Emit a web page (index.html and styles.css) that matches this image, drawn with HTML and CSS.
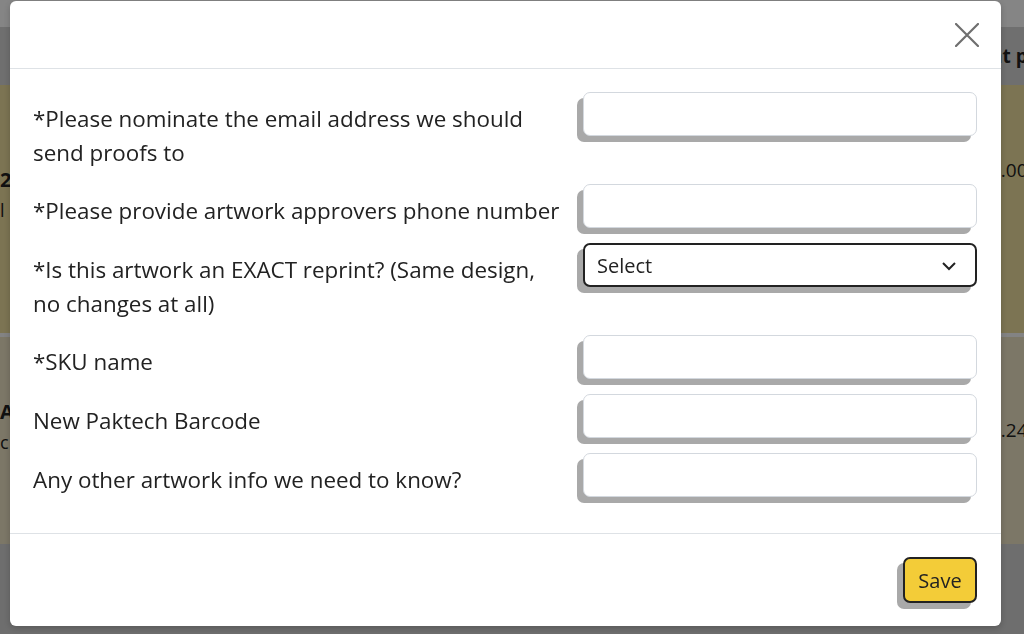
FILE: index.html
```html
<!DOCTYPE html>
<html lang="en">
<head>
    <title>Artwork Details</title>
    <link rel="stylesheet" href="styles.css">
</head>
<body>
    <div class="page">
        <div class="topbar"></div>
        <div class="orders-head">
            <div class="cell-main"></div>
            <div class="cell-end">nt price</div>
        </div>
        <div class="order-row yellow">
            <div class="cell-main first">
                <div class="item-code">2104</div>
                <div class="item-name">l &nbsp;lid</div>
            </div>
            <div class="cell-end first">1.00</div>
        </div>
        <div class="order-row cream">
            <div class="cell-main second">
                <div class="item-code">A</div>
                <div class="item-name">c</div>
            </div>
            <div class="cell-end second">1.24</div>
        </div>
    </div>

    <div class="backdrop"></div>

    <div class="modal">
        <div class="modal-header">
            <button class="close" type="button" aria-label="Close">
                <svg width="24" height="24" viewBox="0 0 24 24">
                    <path d="M1 1 L23 23 M23 1 L1 23" stroke="#6f6f6f" stroke-width="2.2" fill="none" stroke-linecap="round"/>
                </svg>
            </button>
        </div>
        <form class="modal-body">
            <div class="form-row">
                <label>*Please nominate the email address we should send proofs to</label>
                <input type="email" class="field">
            </div>
            <div class="form-row">
                <label>*Please provide artwork approvers phone number</label>
                <input type="text" class="field">
            </div>
            <div class="form-row">
                <label>*Is this artwork an EXACT reprint? (Same design, no changes at all)</label>
                <div class="select-wrap">
                    <select class="field select">
                        <option>Select</option>
                        <option>Yes</option>
                        <option>No</option>
                    </select>
                    <svg class="chevron" width="16" height="10" viewBox="0 0 16 10">
                        <path d="M2 2 L8 8 L14 2" stroke="#222" stroke-width="2" fill="none"/>
                    </svg>
                </div>
            </div>
            <div class="form-row">
                <label>*SKU name</label>
                <input type="text" class="field">
            </div>
            <div class="form-row">
                <label>New Paktech Barcode</label>
                <input type="text" class="field">
            </div>
            <div class="form-row">
                <label>Any other artwork info we need to know?</label>
                <input type="text" class="field">
            </div>
        </form>
        <div class="modal-footer">
            <button class="save" type="button">Save</button>
        </div>
    </div>
</body>
</html>
```

FILE: styles.css
```css
body {
    margin: 0;
    font-family: "Open Sans", "Noto Sans", sans-serif;
    color: #222;
    background-color: #d4d4d4;
    overflow: hidden;
}

/* page behind the modal */
.page {
    width: 1024px;
    height: 634px;
    background-color: #d4d4d4;
}

.topbar {
    height: 27px;
    background-color: #ffffff;
}

.orders-head,
.order-row {
    display: flex;
}

.orders-head {
    height: 58px;
    background-color: #d5d5d5;
    font-weight: bold;
    font-size: 19px;
    line-height: 58px;
}

.cell-main {
    flex: 1;
    padding-left: 0;
    font-size: 18px;
    line-height: 30px;
}

.cell-end {
    width: 34px;
    white-space: nowrap;
    overflow: hidden;
    font-size: 19px;
}

.order-row.yellow {
    height: 248px;
    background-color: #eedfa0;
}

.order-row.cream {
    height: 207px;
    background-color: #ede5c6;
    border-top: 4px solid #fcfcfc;
}

.item-code {
    font-weight: bold;
    font-size: 20px;
}

.cell-main.first { padding-top: 80px; }
.cell-end.first { padding-top: 72px; }
.cell-main.second { padding-top: 60px; }
.cell-end.second { padding-top: 80px; }

.backdrop {
    position: fixed;
    inset: 0;
    background-color: rgba(0, 0, 0, 0.48);
}

/* modal */
.modal {
    position: absolute;
    top: 1px;
    left: 10px;
    width: 991px;
    background-color: #ffffff;
    border-radius: 6px;
    box-shadow: 0 2px 6px rgba(0, 0, 0, 0.2);
}

.modal-header {
    height: 67px;
    border-bottom: 1px solid #dee2e6;
    display: flex;
    justify-content: flex-end;
    align-items: center;
    padding-right: 22px;
}

.close {
    background: none;
    border: none;
    padding: 0;
    width: 24px;
    height: 24px;
    cursor: pointer;
}

.modal-body {
    padding: 23px 24px 36px 23px;
    display: flex;
    flex-direction: column;
    gap: 15px;
}

.form-row {
    display: grid;
    grid-template-columns: 1fr 394px;
    column-gap: 20px;
    align-items: start;
}

.form-row label {
    font-size: 22.4px;
    line-height: 33.5px;
    padding-top: 10px;
    color: #222;
}

.field {
    box-sizing: border-box;
    width: 394px;
    height: 44px;
    border: 1px solid #d3d8de;
    border-radius: 7px;
    background-color: #ffffff;
    box-shadow: -6px 6px 0 #a9a9a9;
    font-family: "Open Sans", sans-serif;
    font-size: 20px;
    padding: 0 12px;
    margin: 0;
}

.select-wrap {
    position: relative;
}

.select {
    appearance: none;
    border: 2px solid #222;
    color: #222;
    padding-left: 12px;
}

.chevron {
    position: absolute;
    right: 20px;
    top: 18px;
}

.modal-footer {
    border-top: 1px solid #dee2e6;
    padding: 23px 24px 23px 0;
    display: flex;
    justify-content: flex-end;
}

.save {
    width: 74px;
    height: 46px;
    background-color: #f3cc38;
    border: 2px solid #222;
    border-radius: 7px;
    box-shadow: -6px 6px 0 #a9a9a9;
    font-family: "Open Sans", sans-serif;
    font-size: 20px;
    color: #222;
    cursor: pointer;
}
```
